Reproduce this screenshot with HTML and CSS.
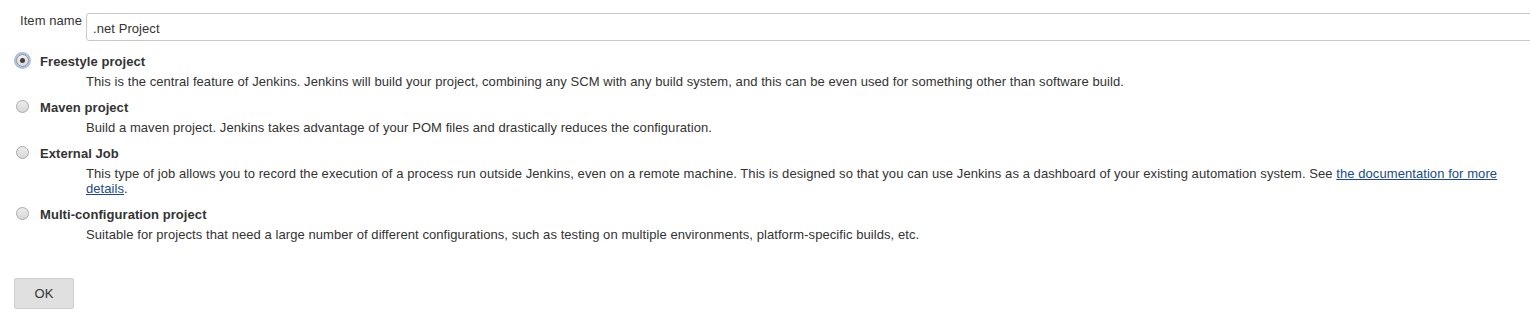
FILE: index.html
```
<!DOCTYPE html>
<html lang="en">
<head>
    <meta charset="UTF-8">
    <title>New Item</title>
    <link rel="stylesheet" href="styles.css">
</head>
<body>
    <div class="name-row">
        <label class="name-label" for="name">Item name</label>
        <input type="text" id="name" class="name-input" value=".net Project">
    </div>

    <div class="options">
        <div class="option">
            <div class="option-head">
                <span class="radio checked"><span class="dot"></span></span>
                <span class="option-title">Freestyle project</span>
            </div>
            <div class="option-desc">This is the central feature of Jenkins. Jenkins will build your project, combining any SCM with any build system, and this can be even used for something other than software build.</div>
        </div>
        <div class="option">
            <div class="option-head">
                <span class="radio"></span>
                <span class="option-title">Maven project</span>
            </div>
            <div class="option-desc">Build a maven project. Jenkins takes advantage of your POM files and drastically reduces the configuration.</div>
        </div>
        <div class="option">
            <div class="option-head">
                <span class="radio"></span>
                <span class="option-title">External Job</span>
            </div>
            <div class="option-desc">This type of job allows you to record the execution of a process run outside Jenkins, even on a remote machine. This is designed so that you can use Jenkins as a dashboard of your existing automation system. See <a href="#">the documentation for more details</a>.</div>
        </div>
        <div class="option">
            <div class="option-head">
                <span class="radio"></span>
                <span class="option-title">Multi-configuration project</span>
            </div>
            <div class="option-desc">Suitable for projects that need a large number of different configurations, such as testing on multiple environments, platform-specific builds, etc.</div>
        </div>
    </div>

    <button class="ok-btn">OK</button>
</body>
</html>
```

FILE: styles.css
```
body { margin: 0; padding: 13px 0 0 0; font-family: "Liberation Sans", Arial, sans-serif; font-size: 13px; letter-spacing: 0.07px; color: #333; background: #fff; overflow: hidden; }
.name-row { display: flex; align-items: flex-start; }
.name-label { flex: none; width: 66px; margin-left: 20px; white-space: nowrap; line-height: 15px; }
.name-input { flex: none; width: 1470px; height: 28px; box-sizing: border-box; border: 1px solid #c8c8c8; border-radius: 3px; padding: 2px 6px 0 6px; font-family: "Liberation Sans", Arial, sans-serif; font-size: 13px; letter-spacing: 0.07px; color: #333; outline: none; }
.options { margin-top: 13px; padding-right: 20px; }
.option { margin-bottom: 11px; }
.option-head { display: flex; align-items: flex-start; height: 16px; }
.option-title { font-weight: bold; line-height: 16px; margin-left: 11px; }
.radio { box-sizing: border-box; width: 13px; height: 13px; margin-left: 16px; border-radius: 50%; border: 1px solid #a9a9a9; background: linear-gradient(#ececec, #d8d8d8); display: flex; align-items: center; justify-content: center; }
.radio.checked { box-shadow: 0 0 0 2px #a9c0e4; border-color: #8a8a8a; background: linear-gradient(#f0f0f0, #dcdcdc); }
.dot { width: 5px; height: 5px; border-radius: 50%; background: #404040; }
.option-desc { margin: 4px 0 0 86px; line-height: 15px; }
.option-desc a { color: #204a87; text-decoration: underline; }
.ok-btn { display: block; margin: 36px 0 0 14px; width: 60px; height: 31px; background: #e0e0e0; border: 1px solid #cfcfcf; border-radius: 2px; font-family: "Liberation Sans", Arial, sans-serif; font-size: 13px; color: #333; padding: 0; }
```
